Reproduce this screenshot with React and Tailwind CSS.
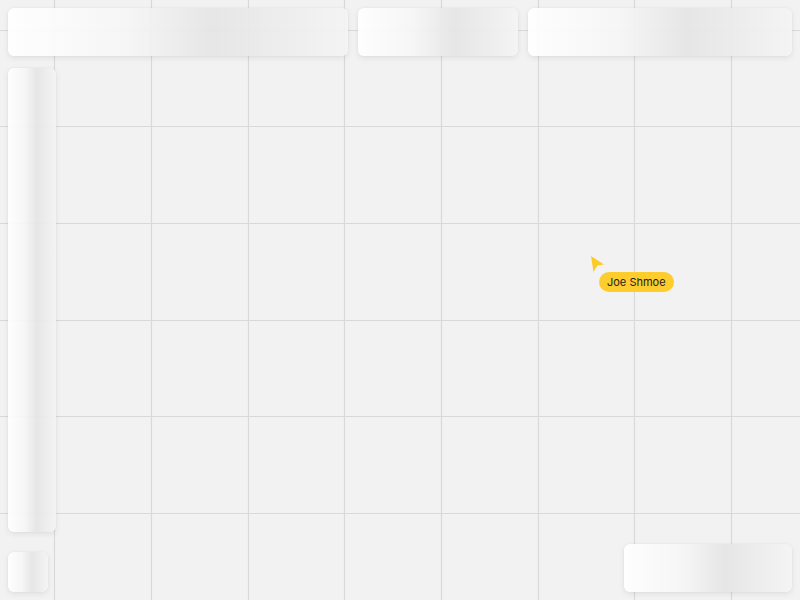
import React from "react";

const panel =
  "rounded-md shadow-[0_2px_6px_rgba(0,0,0,0.08),0_0_2px_rgba(0,0,0,0.06)] bg-[linear-gradient(90deg,rgba(255,255,255,0.92)_0%,rgba(246,246,246,0.92)_35%,rgba(229,229,229,0.92)_60%,rgba(244,244,244,0.92)_100%)]";

function Grid() {
  const size = 96.67;
  const v = [];
  for (let i = 0; i < 9; i++) v.push(Math.round(54.3 + i * size));
  const h = [];
  for (let i = 0; i < 7; i++) h.push(Math.round(29.8 + i * size));
  return (
    <svg className="absolute inset-0" width="800" height="600">
      {v.map((x) => (
        <line key={"v" + x} x1={x + 0.5} y1="0" x2={x + 0.5} y2="600" stroke="#d9d9d9" strokeWidth="1.2" />
      ))}
      {h.map((y) => (
        <line key={"h" + y} x1="0" y1={y + 0.5} x2="800" y2={y + 0.5} stroke="#d9d9d9" strokeWidth="1.2" />
      ))}
    </svg>
  );
}

export default function App() {
  return (
    <div className="relative w-[800px] h-[600px] overflow-hidden bg-[#f2f2f2] font-['Inter',sans-serif]">
      <Grid />
      <div className="absolute inset-0 flex flex-col p-2">
        <div className="flex gap-[10px]">
          <div className={`${panel} w-[340px] h-12`} />
          <div className={`${panel} w-[160px] h-12`} />
          <div className={`${panel} w-[264px] h-12`} />
        </div>
        <div className="flex flex-1 justify-between mt-3">
          <div className="flex flex-col">
            <div className={`${panel} w-12 h-[464px]`} />
            <div className={`${panel} w-10 h-10 mt-5`} />
          </div>
          <div className="flex flex-col justify-end">
            <div className={`${panel} w-[168px] h-12`} />
          </div>
        </div>
      </div>
      <div className="absolute left-[590px] top-[255px]">
        <svg width="16" height="18" viewBox="0 0 16 18">
          <polygon points="1,1 14,9.5 7.5,10.5 3.5,17" fill="#fccb2a" />
        </svg>
      </div>
      <div className="absolute left-[599px] top-[272px] h-5 px-2 rounded-full bg-[#fccd2c] flex items-center text-[11px] text-[#222222] leading-none">
        Joe Shmoe
      </div>
    </div>
  );
}
